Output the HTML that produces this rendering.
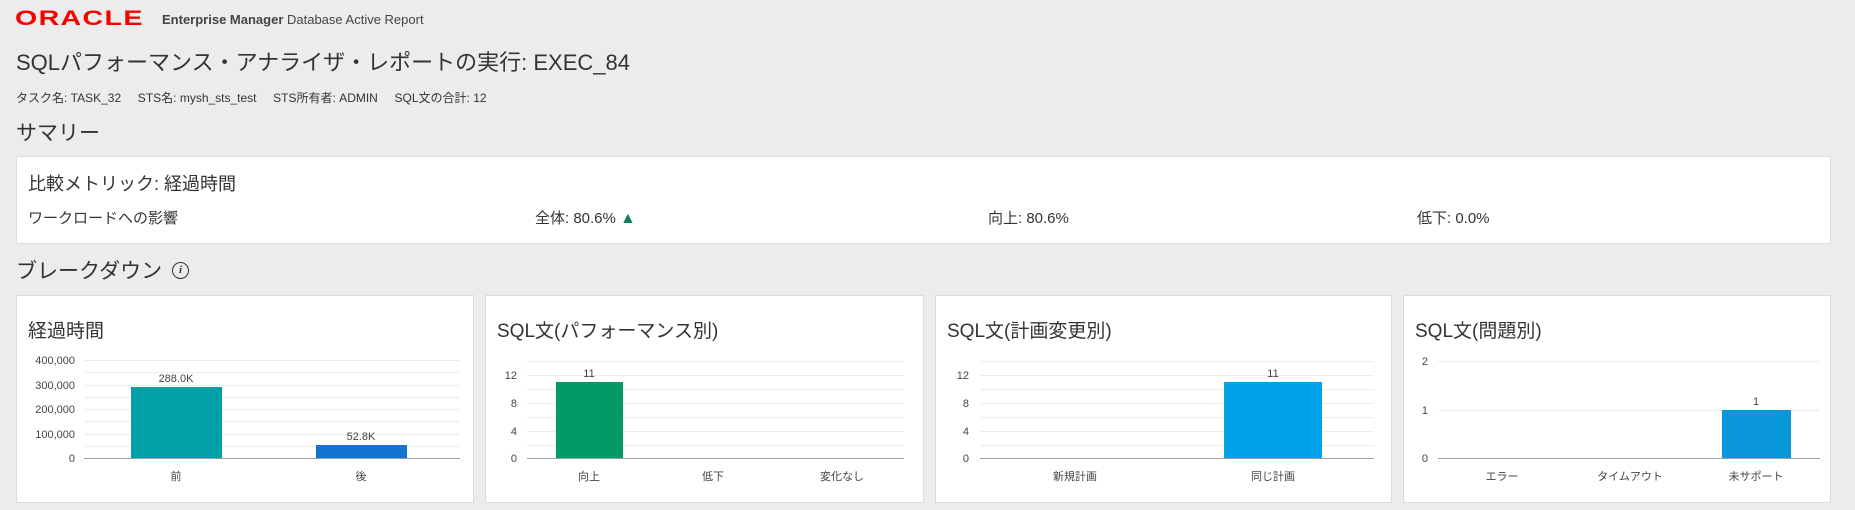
<!DOCTYPE html>
<html><head><meta charset="utf-8"><style>
*{margin:0;padding:0;box-sizing:border-box}
body{width:1855px;height:510px;background:#ececec;font-family:"Liberation Sans","Noto Sans CJK JP",sans-serif;color:#333;position:relative;overflow:hidden}
.a{position:absolute;white-space:nowrap}
.box{position:absolute;background:#fff;border:1px solid #dcdcdc}
</style></head><body>
<div class="a" style="left:15px;top:9px;color:#f80000;font-size:21px;font-weight:bold;letter-spacing:1px;transform:scaleX(1.36);transform-origin:left;line-height:20px">ORACLE</div>
<div class="a" style="left:162px;top:12px;font-size:13px;color:#444"><b>Enterprise Manager</b> Database Active Report</div>
<div class="a" style="left:16px;top:45px;font-size:22px;color:#333">SQLパフォーマンス・アナライザ・レポートの実行: EXEC_84</div>
<div class="a" style="left:16px;top:89px;font-size:12px">タスク名: TASK_32&nbsp;&nbsp;&nbsp;&nbsp;&nbsp;STS名: mysh_sts_test&nbsp;&nbsp;&nbsp;&nbsp;&nbsp;STS所有者: ADMIN&nbsp;&nbsp;&nbsp;&nbsp;&nbsp;SQL文の合計: 12</div>
<div class="a" style="left:16px;top:117px;font-size:21px">サマリー</div>
<div class="box" style="left:16px;top:156px;width:1815px;height:88px"></div>
<div class="a" style="left:28px;top:170px;font-size:18px">比較メトリック: 経過時間</div>
<div class="a" style="left:28px;top:207px;font-size:15px">ワークロードへの影響</div>
<div class="a" style="left:535px;top:207px;font-size:15px">全体: 80.6% <span style="color:#0f7f5a;font-size:16px">▲</span></div>
<div class="a" style="left:988px;top:207px;font-size:15px">向上: 80.6%</div>
<div class="a" style="left:1417px;top:207px;font-size:15px">低下: 0.0%</div>
<div class="a" style="left:16px;top:255px;font-size:21px">ブレークダウン</div>
<div class="a" style="left:172px;top:262px;width:17px;height:17px;border:1.5px solid #333;border-radius:50%;font:italic bold 11px 'Liberation Serif',serif;text-align:center;line-height:14px">i</div>
<div class="box" style="left:16px;top:295px;width:458px;height:208px"></div>
<div class="box" style="left:485px;top:295px;width:439px;height:208px"></div>
<div class="box" style="left:935px;top:295px;width:457px;height:208px"></div>
<div class="box" style="left:1403px;top:295px;width:428px;height:208px"></div>
<div class="a" style="left:28px;top:316px;font-size:19px">経過時間</div>
<div class="a" style="left:497px;top:316px;font-size:19px">SQL文(パフォーマンス別)</div>
<div class="a" style="left:947px;top:316px;font-size:19px">SQL文(計画変更別)</div>
<div class="a" style="left:1415px;top:316px;font-size:19px">SQL文(問題別)</div>
<svg class="a" style="left:0;top:0" width="1855" height="510" font-family="Liberation Sans, Noto Sans CJK JP, sans-serif" font-size="11" fill="#444">
<g stroke="#ebebeb" stroke-width="1">
<path d="M84 360.5H460M84 372.5H460M84 385.5H460M84 397.5H460M84 409.5H460M84 421.5H460M84 434.5H460M84 446.5H460"/>
<path d="M527 361.5H904M527 375.5H904M527 389.5H904M527 403.5H904M527 417.5H904M527 431.5H904M527 445.5H904"/>
<path d="M980 361.5H1374M980 375.5H1374M980 389.5H1374M980 403.5H1374M980 417.5H1374M980 431.5H1374M980 445.5H1374"/>
<path d="M1438 361.5H1820M1438 410.5H1820"/>
</g>
<g stroke="#a0a0a0"><path d="M84 458.5H460M527 458.5H904M980 458.5H1374M1438 458.5H1820"/></g>
<rect x="131" y="387" width="91" height="71" fill="#00a0a8"/>
<rect x="316" y="445" width="91" height="13" fill="#1474cf"/>
<rect x="556" y="382" width="67" height="76" fill="#009b67"/>
<rect x="1224" y="382" width="98" height="76" fill="#00a3e8"/>
<rect x="1722" y="410" width="69" height="48" fill="#0a97d9"/>
<g text-anchor="end">
<text x="75" y="364">400,000</text><text x="75" y="389">300,000</text><text x="75" y="413">200,000</text><text x="75" y="438">100,000</text><text x="75" y="462">0</text>
<text x="517" y="379">12</text><text x="517" y="407">8</text><text x="517" y="435">4</text><text x="517" y="462">0</text>
<text x="969" y="379">12</text><text x="969" y="407">8</text><text x="969" y="435">4</text><text x="969" y="462">0</text>
<text x="1428" y="365">2</text><text x="1428" y="414">1</text><text x="1428" y="462">0</text>
</g>
<g text-anchor="middle">
<text x="176" y="382">288.0K</text><text x="361" y="440">52.8K</text>
<text x="589" y="377">11</text><text x="1273" y="377">11</text><text x="1756" y="405">1</text>
<text x="176" y="480">前</text><text x="361" y="480">後</text>
<text x="589" y="480">向上</text><text x="713" y="480">低下</text><text x="842" y="480">変化なし</text>
<text x="1075" y="480">新規計画</text><text x="1273" y="480">同じ計画</text>
<text x="1502" y="480">エラー</text><text x="1630" y="480">タイムアウト</text><text x="1756" y="480">未サポート</text>
</g>
</svg>
</body></html>
